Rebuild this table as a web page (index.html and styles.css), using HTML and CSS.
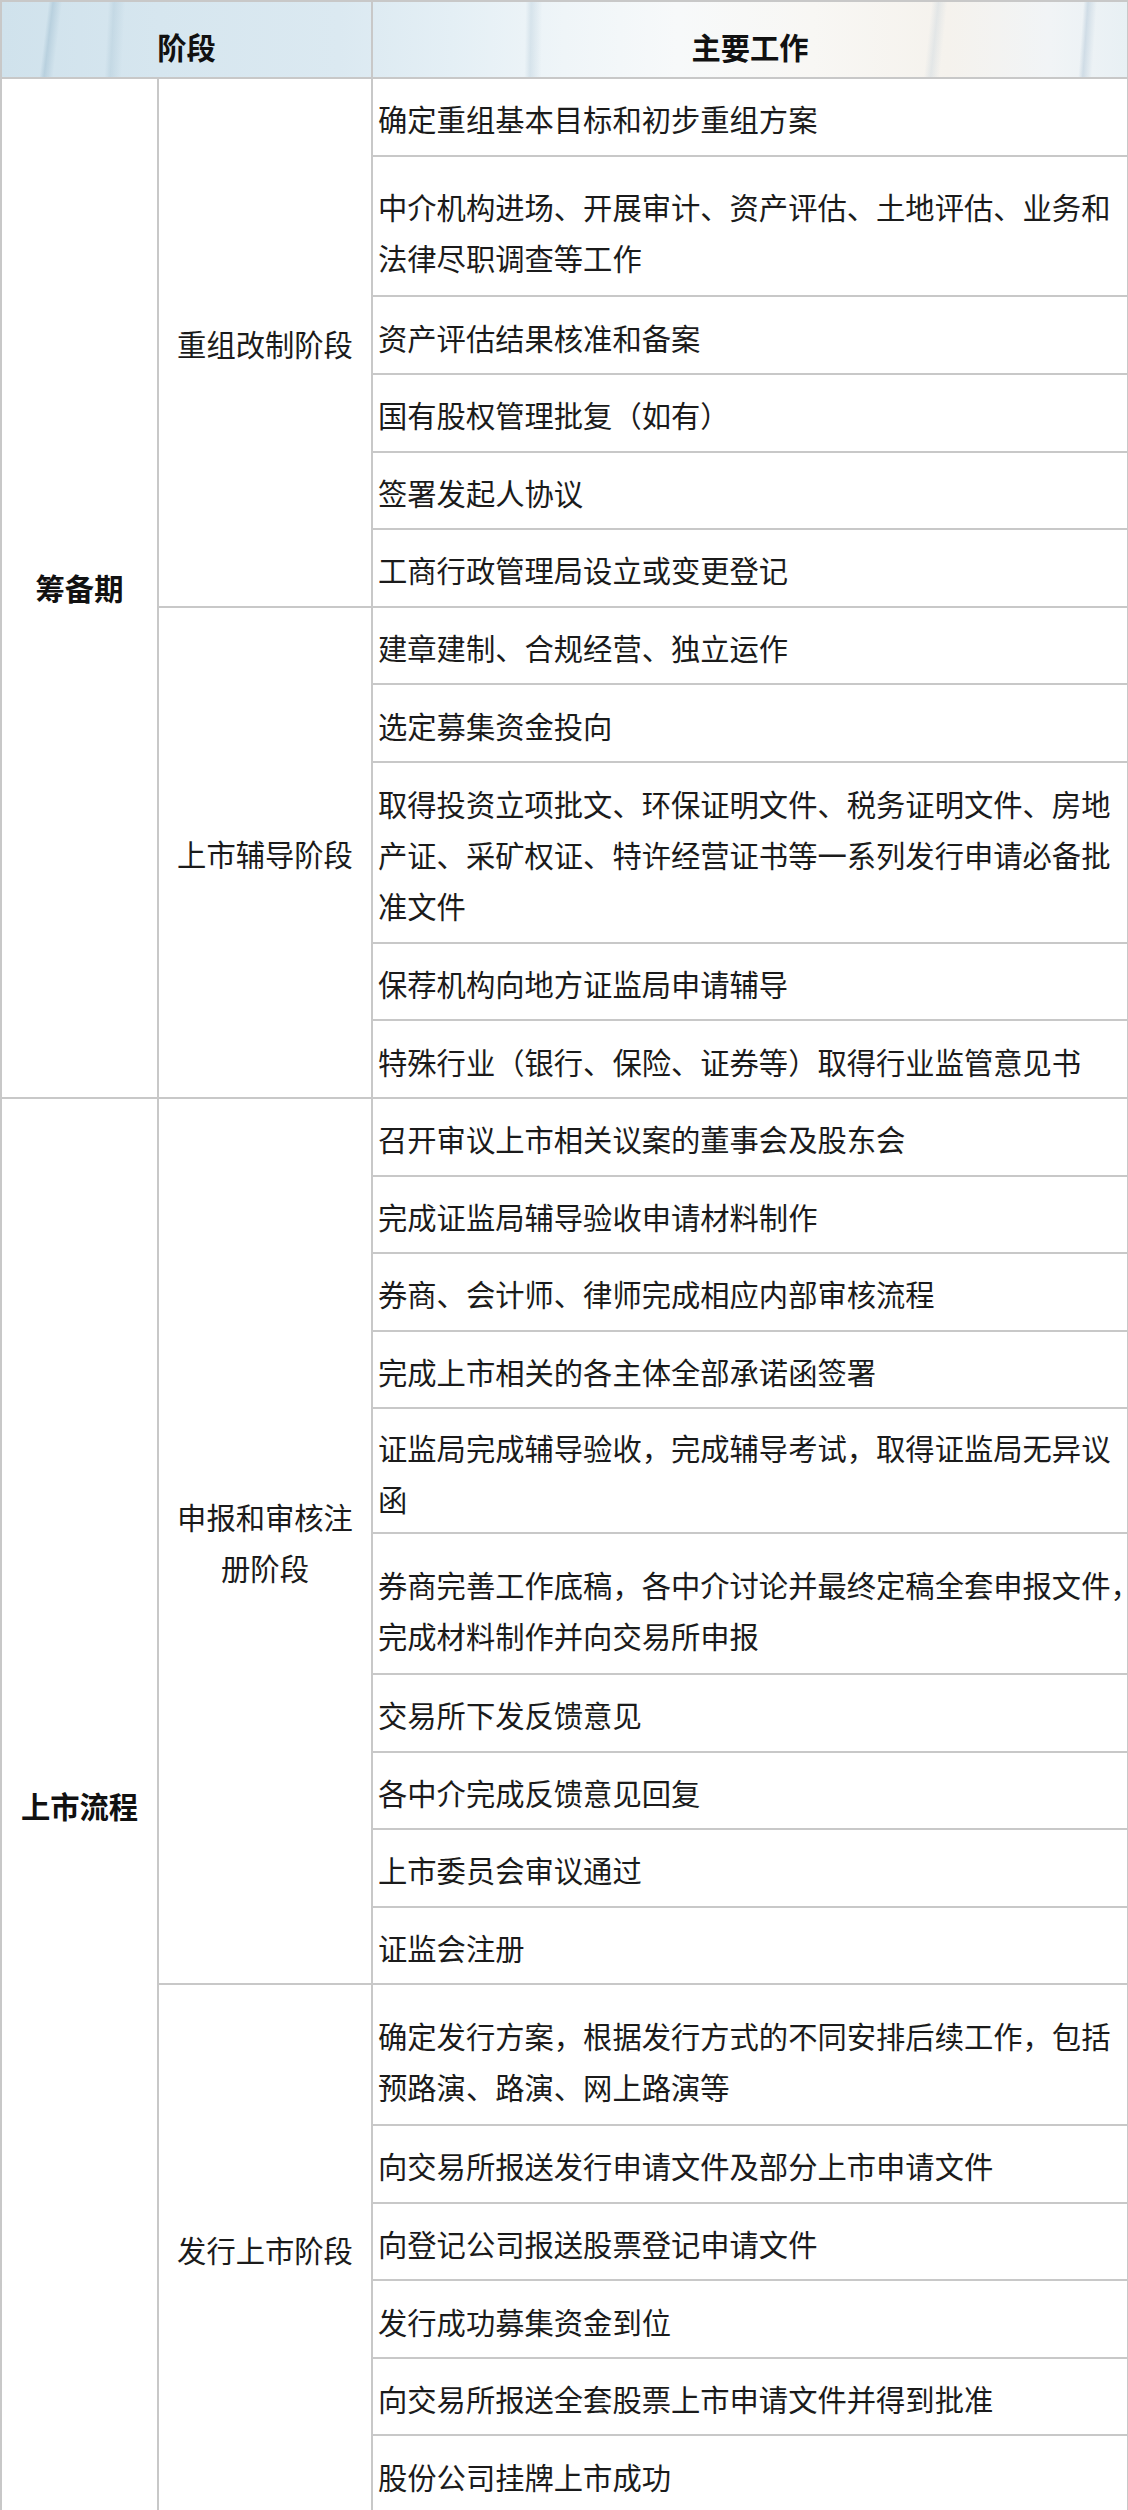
FILE: index.html
```html
<!DOCTYPE html>
<html lang="zh-CN">
<head>
<meta charset="utf-8">
<title>上市流程</title>
<link rel="stylesheet" href="styles.css">
</head>
<body>
<table class="plan">
  <colgroup>
    <col class="c-period">
    <col class="c-stage">
    <col class="c-task">
  </colgroup>
  <thead>
    <tr class="head-row">
      <th colspan="2">阶段</th>
      <th>主要工作</th>
    </tr>
  </thead>
  <tbody>
    <tr class="h1">
      <td class="period" rowspan="11">筹备期</td>
      <td class="stage" rowspan="6">重组改制阶段</td>
      <td class="task">确定重组基本目标和初步重组方案</td>
    </tr>
    <tr class="h2t"><td class="task tall">中介机构进场、开展审计、资产评估、土地评估、业务和法律尽职调查等工作</td></tr>
    <tr class="h1"><td class="task">资产评估结果核准和备案</td></tr>
    <tr class="h1"><td class="task">国有股权管理批复（如有）</td></tr>
    <tr class="h1"><td class="task">签署发起人协议</td></tr>
    <tr class="h1"><td class="task">工商行政管理局设立或变更登记</td></tr>
    <tr class="h1">
      <td class="stage" rowspan="5">上市辅导阶段</td>
      <td class="task">建章建制、合规经营、独立运作</td>
    </tr>
    <tr class="h1"><td class="task">选定募集资金投向</td></tr>
    <tr class="h3"><td class="task">取得投资立项批文、环保证明文件、税务证明文件、房地产证、采矿权证、特许经营证书等一系列发行申请必备批准文件</td></tr>
    <tr class="h1"><td class="task">保荐机构向地方证监局申请辅导</td></tr>
    <tr class="h1"><td class="task">特殊行业（银行、保险、证券等）取得行业监管意见书</td></tr>
    <tr class="h1">
      <td class="period" rowspan="16">上市流程</td>
      <td class="stage" rowspan="10">申报和审核注册阶段</td>
      <td class="task">召开审议上市相关议案的董事会及股东会</td>
    </tr>
    <tr class="h1"><td class="task">完成证监局辅导验收申请材料制作</td></tr>
    <tr class="h1"><td class="task">券商、会计师、律师完成相应内部审核流程</td></tr>
    <tr class="h1"><td class="task">完成上市相关的各主体全部承诺函签署</td></tr>
    <tr class="h2"><td class="task">证监局完成辅导验收，完成辅导考试，取得证监局无异议函</td></tr>
    <tr class="h2t"><td class="task tall clip"><span class="nowrap">券商完善工作底稿，各中介讨论并最终定稿全套申报文件，</span><br>完成材料制作并向交易所申报</td></tr>
    <tr class="h1"><td class="task">交易所下发反馈意见</td></tr>
    <tr class="h1"><td class="task">各中介完成反馈意见回复</td></tr>
    <tr class="h1"><td class="task">上市委员会审议通过</td></tr>
    <tr class="h1"><td class="task">证监会注册</td></tr>
    <tr class="h2t">
      <td class="stage" rowspan="6">发行上市阶段</td>
      <td class="task tall">确定发行方案，根据发行方式的不同安排后续工作，包括预路演、路演、网上路演等</td>
    </tr>
    <tr class="h1"><td class="task">向交易所报送发行申请文件及部分上市申请文件</td></tr>
    <tr class="h1"><td class="task">向登记公司报送股票登记申请文件</td></tr>
    <tr class="h1"><td class="task">发行成功募集资金到位</td></tr>
    <tr class="h1"><td class="task">向交易所报送全套股票上市申请文件并得到批准</td></tr>
    <tr class="h1"><td class="task">股份公司挂牌上市成功</td></tr>
  </tbody>
</table>
</body>
</html>
```

FILE: styles.css
```css
html, body {
  margin: 0;
  padding: 0;
  background: #ffffff;
  overflow-x: hidden;
}

.plan {
  width: 1127px;
  border-collapse: collapse;
  table-layout: fixed;
  font-family: "Noto Sans CJK SC", "Noto Sans", sans-serif;
  font-size: 29.3px;
  line-height: 51px;
  color: #1b1b1b;
}

.c-period { width: 157px; }
.c-stage { width: 214px; }
.c-task { width: 756px; }

.plan th,
.plan td {
  border: 2px solid #c8c8c8;
  vertical-align: middle;
}

.head-row {
  height: 77px;
  background:
    linear-gradient(97deg, transparent 0 4.2%, rgba(120,160,185,.28) 4.6%, transparent 5.4%),
    linear-gradient(93deg, transparent 0 9.5%, rgba(140,175,195,.22) 10%, transparent 11%),
    linear-gradient(91deg, transparent 0 46.5%, rgba(150,180,200,.25) 47%, transparent 48%),
    linear-gradient(96deg, transparent 0 82%, rgba(160,185,205,.22) 82.6%, transparent 83.4%),
    linear-gradient(94deg, transparent 0 95.6%, rgba(140,170,195,.30) 96%, transparent 96.8%),
    linear-gradient(90deg, #d0e2ec 0%, #d6e6ef 14%, #dbe9f1 30%, #e4eff5 40%, #eff5f8 50%, #f7f9fa 60%, #f8f7f4 72%, #f5f2ed 84%, #f1f4f6 93%, #e8f0f4 100%);
}

.plan th {
  font-weight: 700;
  text-align: center;
  padding: 12px 0 0;
  color: #111111;
  line-height: 40px;
}

.period {
  text-align: center;
  font-weight: 700;
  padding: 0 10px;
  color: #111111;
}

.stage {
  text-align: center;
  padding: 2px 18px 0;
}

.task {
  padding: 4px 8px 0 5px;
}

.task.tall {
  padding-top: 12px;
}

.task.clip {
  overflow: hidden;
}

.nowrap {
  white-space: nowrap;
}

.h1 { height: 77.6px; }
.h2 { height: 124.8px; }
.h2t { height: 140.8px; }
.h3 { height: 180.8px; }
```
